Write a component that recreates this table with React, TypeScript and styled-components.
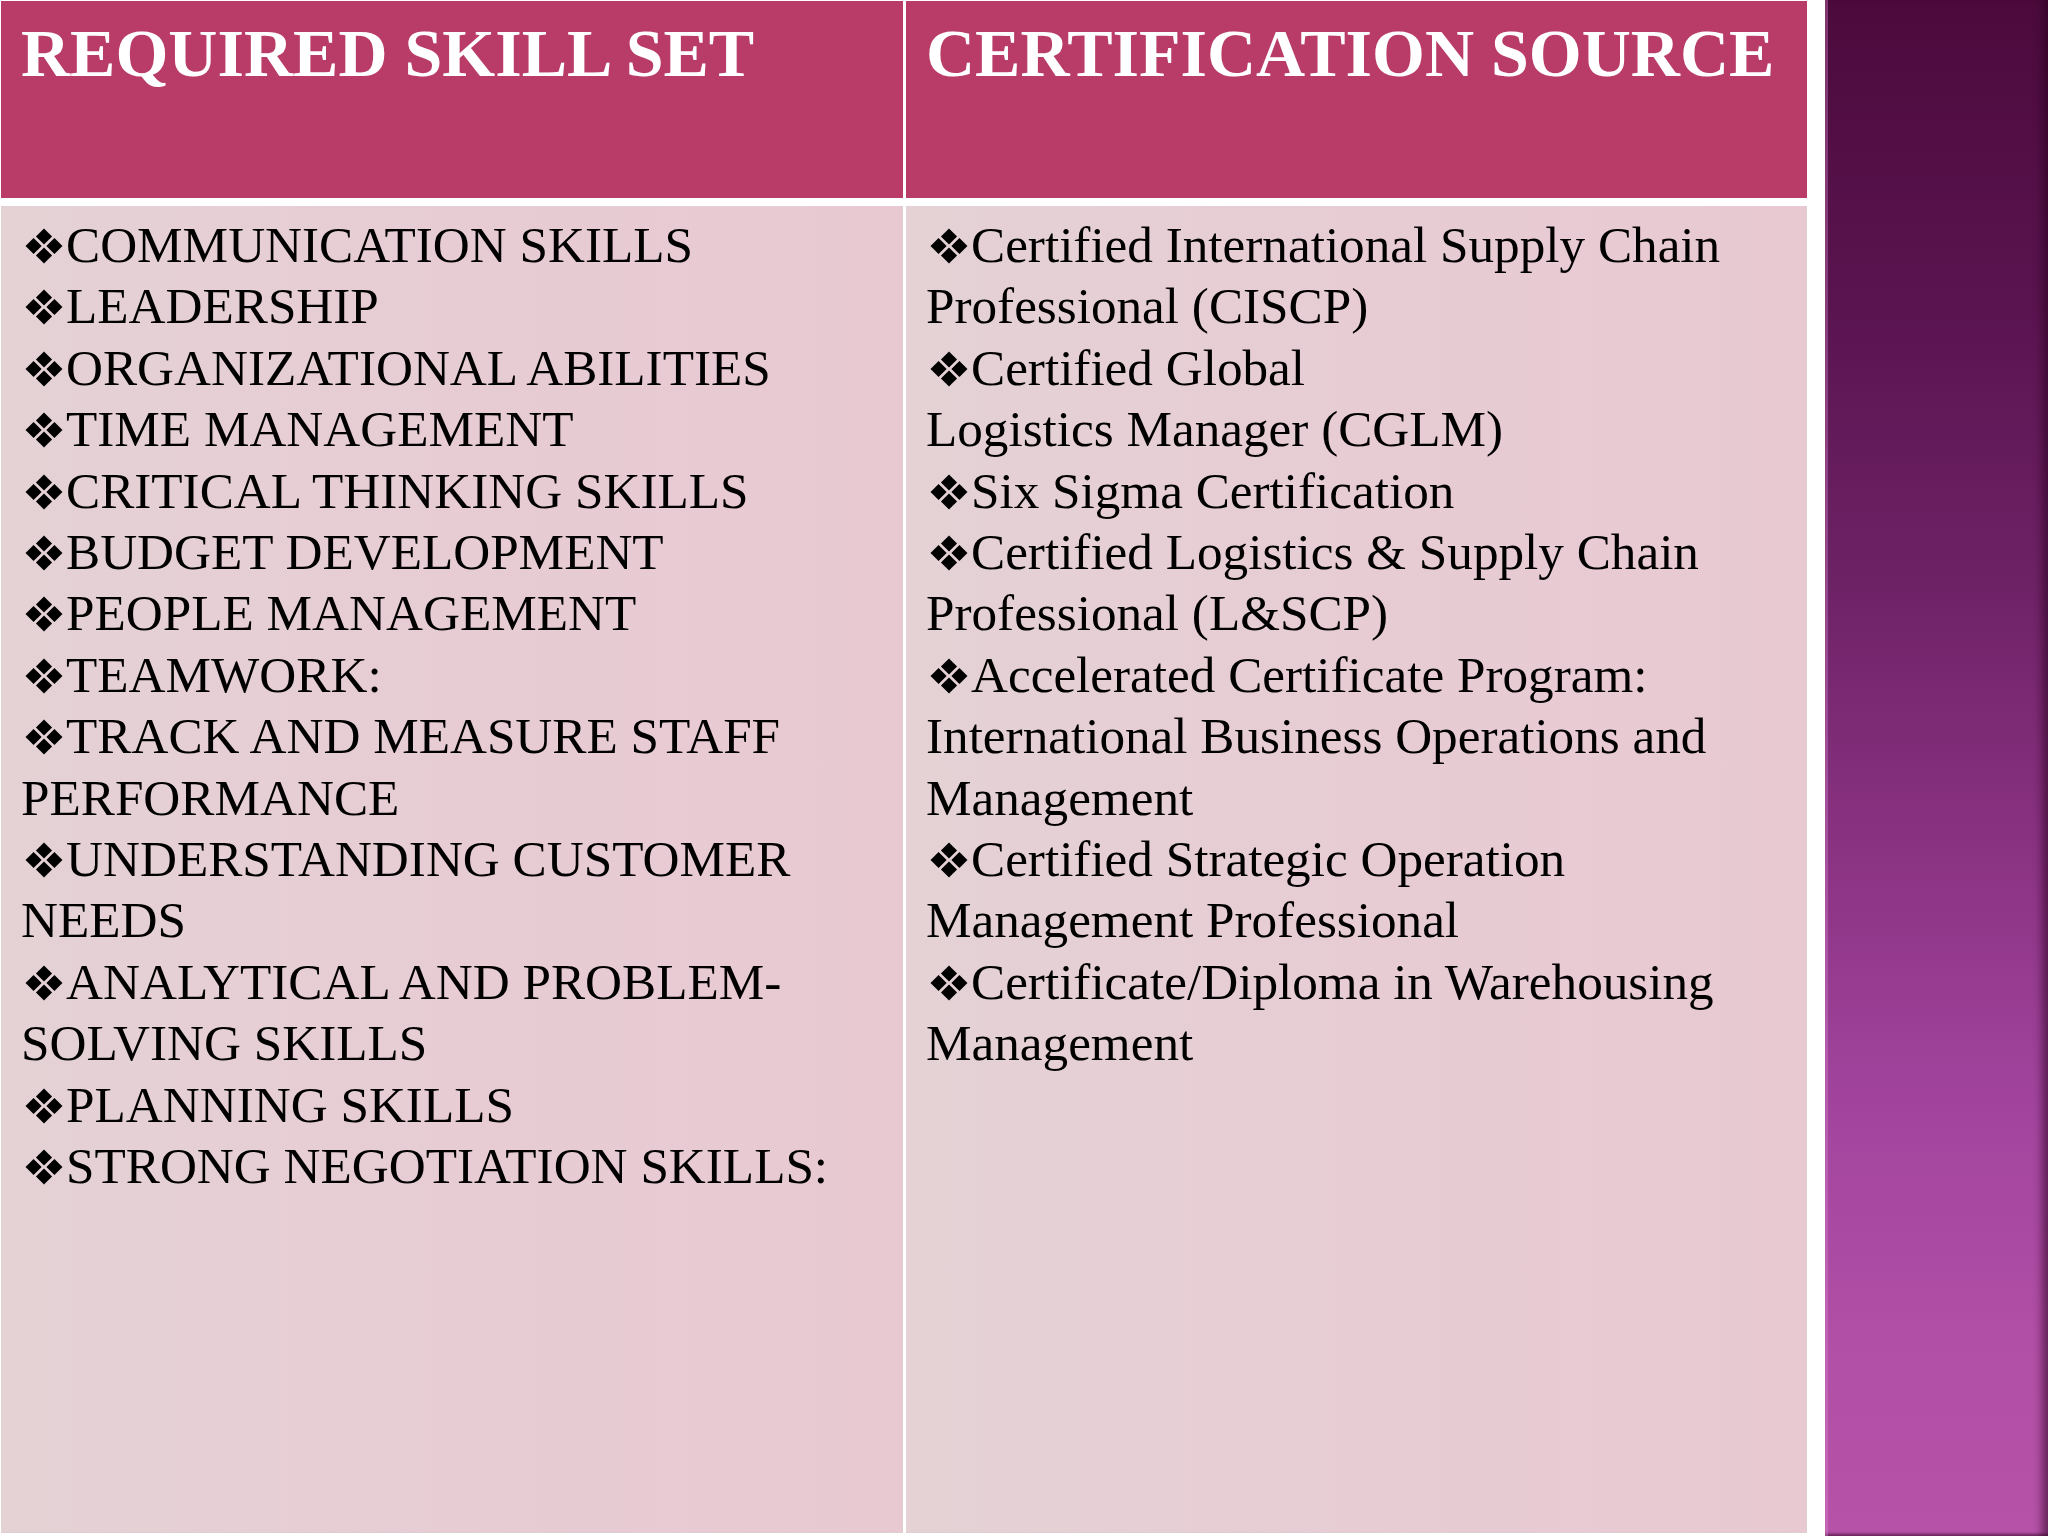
import React from "react";
import styled, { createGlobalStyle } from "styled-components";

const GlobalStyle = createGlobalStyle`
  html, body {
    margin: 0;
    padding: 0;
    background: #ffffff;
  }
  body {
    font-family: "Liberation Serif", "Times New Roman", serif;
  }
`;

const Page = styled.div`
  width: 2048px;
  height: 1536px;
  display: flex;
  flex-direction: row;
  gap: 18px;
  background: #ffffff;
  overflow: hidden;
`;

const Table = styled.div`
  margin: 1px 0 0 1px;
  display: grid;
  grid-template-columns: 902px 901px;
  grid-template-rows: 197px 1327px;
  column-gap: 3px;
  row-gap: 8px;
`;

const HeaderCell = styled.div`
  background: #b93c68;
  padding: 12px 20px 8px;
  color: #ffffff;
  font-family: "Liberation Serif", "Times New Roman", serif;
  font-weight: 700;
  font-size: 68px;
  line-height: 1.2;
  white-space: nowrap;
`;

const BodyCell = styled.div`
  background: linear-gradient(90deg, #e4d2d5 0%, #e7ccd4 50%, #e8c9d2 100%);
  box-shadow: inset -1px 0 0 #dccfd2, inset 0 -1px 0 #dccfd2;
  padding: 8px 20px;
  color: #000000;
  font-family: "Liberation Serif", "Times New Roman", serif;
  font-size: 51.2px;
  line-height: 61.4px;
`;

const Line = styled.div`
  white-space: nowrap;
`;

const BulletSvg = styled.svg`
  width: 38px;
  height: 36px;
  margin: 0 3px 0 4px;
  vertical-align: -2px;
`;

const Side = styled.div`
  flex: 1;
  height: 1536px;
  position: relative;
  background: linear-gradient(
    180deg,
    #4c0a3c 0%,
    #5a1450 20%,
    #6e2266 38%,
    #8a3282 55%,
    #a2449e 72%,
    #b24fa6 88%,
    #b652a8 100%
  );
  box-shadow: inset 3px 0 0 rgba(220, 140, 210, 0.35),
    inset -10px 0 8px -4px rgba(40, 0, 30, 0.55),
    inset 0 -4px 3px -2px rgba(60, 10, 50, 0.6);
`;

const Bullet: React.FC = () => (
  <BulletSvg viewBox="0 0 40 38" aria-hidden="true">
    <polygon points="20,0.5 28.5,9 20,17.5 11.5,9" fill="#000" />
    <polygon points="9,10.5 17.5,19 9,27.5 0.5,19" fill="#000" />
    <polygon points="31,10.5 39.5,19 31,27.5 22.5,19" fill="#000" />
    <polygon points="20,20.5 28.5,29 20,37.5 11.5,29" fill="#000" />
  </BulletSvg>
);

type Item = string[];

const skills: Item[] = [
  ["COMMUNICATION SKILLS"],
  ["LEADERSHIP"],
  ["ORGANIZATIONAL ABILITIES"],
  ["TIME MANAGEMENT"],
  ["CRITICAL THINKING SKILLS"],
  ["BUDGET DEVELOPMENT"],
  ["PEOPLE MANAGEMENT"],
  ["TEAMWORK:"],
  ["TRACK AND MEASURE STAFF", "PERFORMANCE"],
  ["UNDERSTANDING CUSTOMER", "NEEDS"],
  ["ANALYTICAL AND PROBLEM-", "SOLVING SKILLS"],
  ["PLANNING SKILLS"],
  ["STRONG NEGOTIATION SKILLS:"],
];

const certs: Item[] = [
  ["Certified International Supply Chain", "Professional (CISCP)"],
  ["Certified Global", "Logistics Manager (CGLM)"],
  ["Six Sigma Certification"],
  ["Certified Logistics & Supply Chain", "Professional (L&SCP)"],
  [
    "Accelerated Certificate Program:",
    "International Business Operations and",
    "Management",
  ],
  ["Certified Strategic Operation", "Management Professional"],
  ["Certificate/Diploma in Warehousing", "Management"],
];

const ItemList: React.FC<{ items: Item[] }> = ({ items }) => (
  <>
    {items.map((lines, i) => (
      <React.Fragment key={i}>
        {lines.map((text, j) => (
          <Line key={j}>
            {j === 0 && <Bullet />}
            {text}
          </Line>
        ))}
      </React.Fragment>
    ))}
  </>
);

export default function App() {
  return (
    <>
      <GlobalStyle />
      <Page>
        <Table>
          <HeaderCell>REQUIRED SKILL SET</HeaderCell>
          <HeaderCell>CERTIFICATION SOURCE</HeaderCell>
          <BodyCell>
            <ItemList items={skills} />
          </BodyCell>
          <BodyCell>
            <ItemList items={certs} />
          </BodyCell>
        </Table>
        <Side />
      </Page>
    </>
  );
}
